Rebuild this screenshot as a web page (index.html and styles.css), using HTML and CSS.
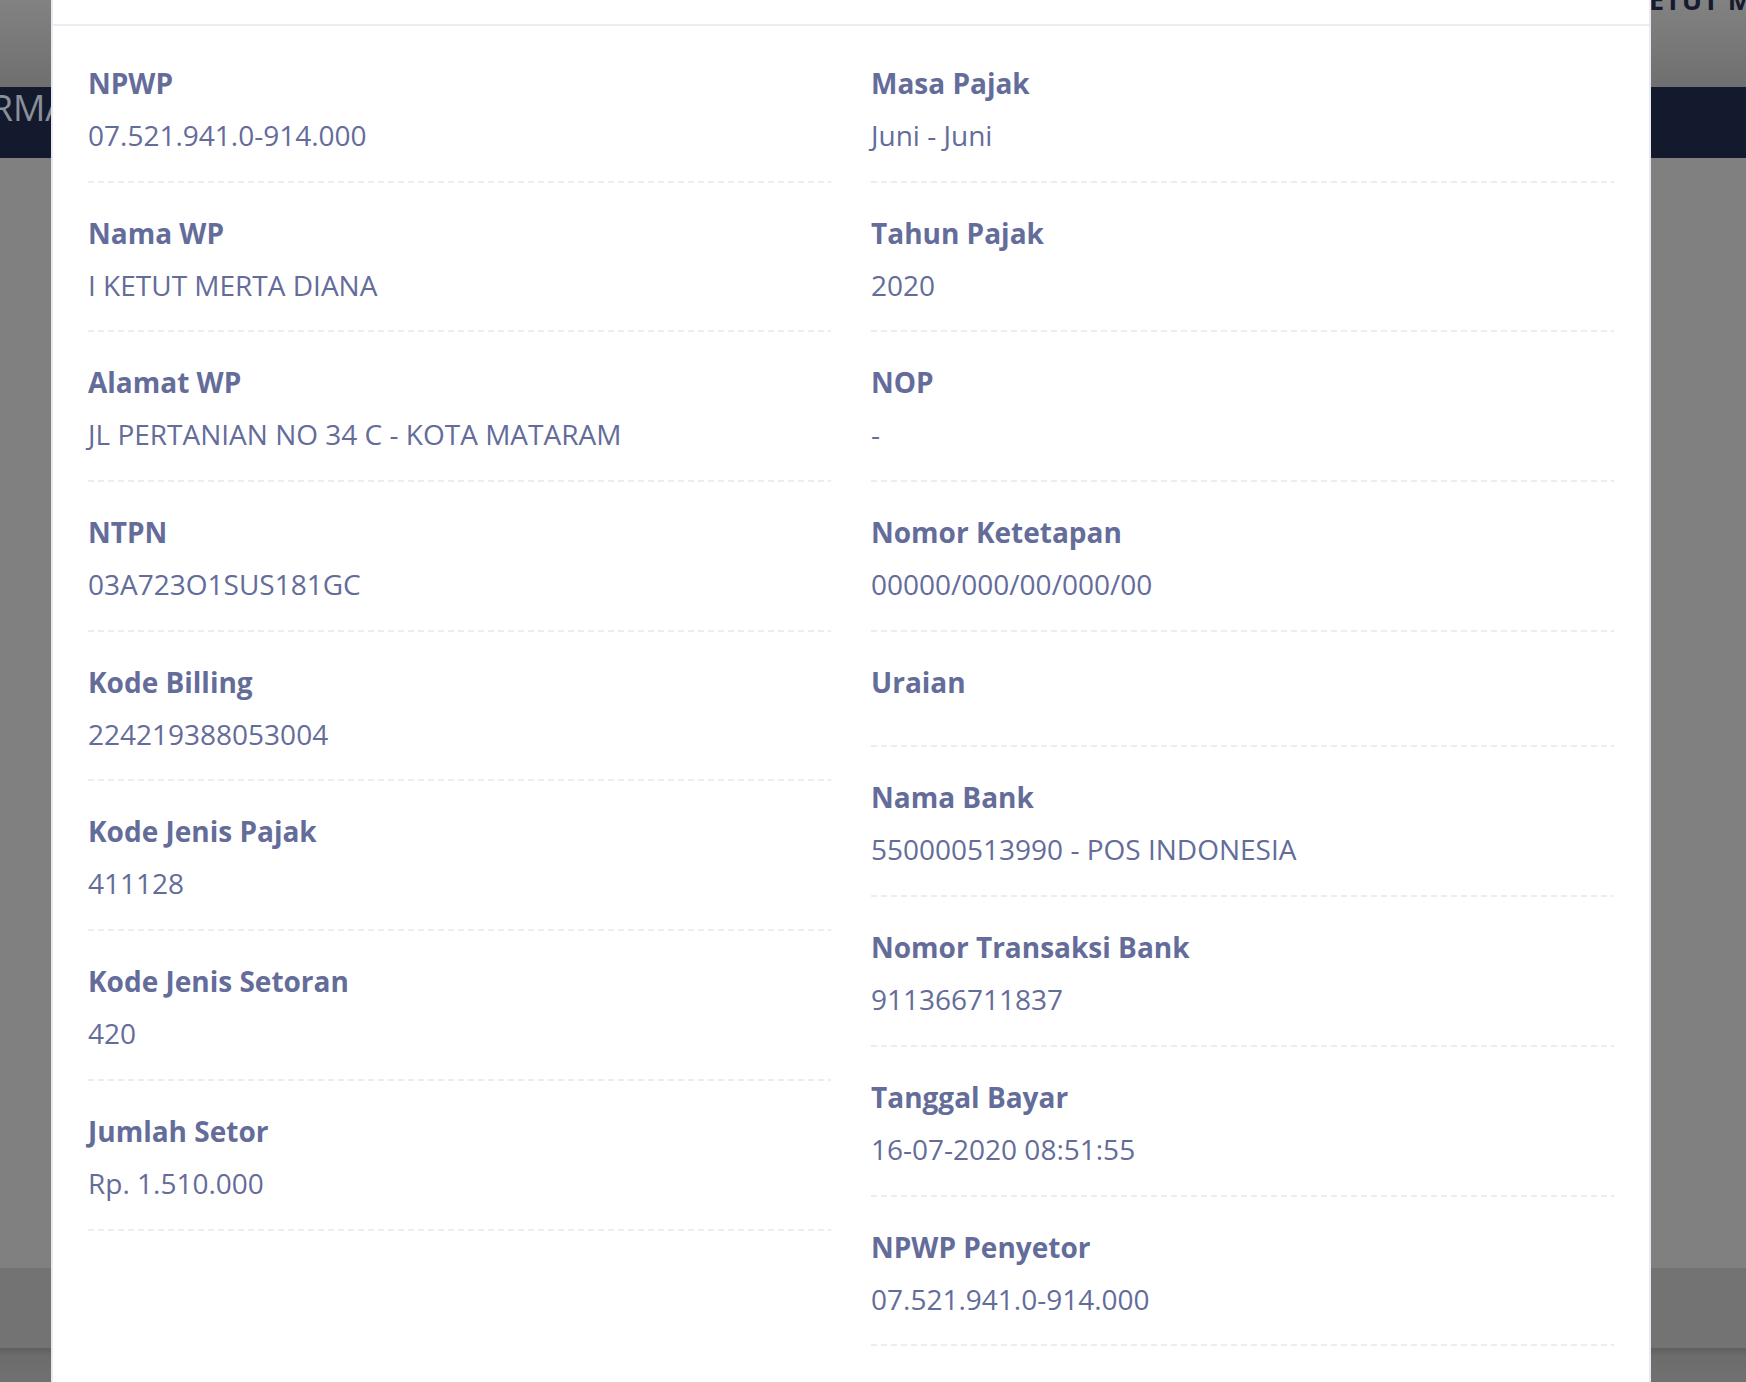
FILE: index.html
```html
<!DOCTYPE html>
<html lang="id">
<head>
<meta charset="utf-8">
<title>Detail Pembayaran</title>
<link rel="stylesheet" href="styles.css">
</head>
<body>
<div class="page">
  <div class="topbar"><span class="user-name">I KETUT MERTA DIANA</span></div>
  <div class="navband"><span class="navband-title">INFORMASI</span></div>
  <div class="content-area"></div>
  <div class="footer-band"></div>
  <div class="footer-bottom"></div>
</div>

<div class="modal">
  <div class="modal-header"></div>
  <div class="modal-body">
    <div class="col">
      <div class="item"><div class="label">NPWP</div><div class="value">07.521.941.0-914.000</div></div>
      <div class="item"><div class="label">Nama WP</div><div class="value">I KETUT MERTA DIANA</div></div>
      <div class="item"><div class="label">Alamat WP</div><div class="value">JL PERTANIAN NO 34 C - KOTA MATARAM</div></div>
      <div class="item"><div class="label">NTPN</div><div class="value">03A723O1SUS181GC</div></div>
      <div class="item"><div class="label">Kode Billing</div><div class="value">224219388053004</div></div>
      <div class="item"><div class="label">Kode Jenis Pajak</div><div class="value">411128</div></div>
      <div class="item"><div class="label">Kode Jenis Setoran</div><div class="value">420</div></div>
      <div class="item"><div class="label">Jumlah Setor</div><div class="value">Rp. 1.510.000</div></div>
    </div>
    <div class="col">
      <div class="item"><div class="label">Masa Pajak</div><div class="value">Juni - Juni</div></div>
      <div class="item"><div class="label">Tahun Pajak</div><div class="value">2020</div></div>
      <div class="item"><div class="label">NOP</div><div class="value">-</div></div>
      <div class="item"><div class="label">Nomor Ketetapan</div><div class="value">00000/000/00/000/00</div></div>
      <div class="item"><div class="label">Uraian</div><div class="value"></div></div>
      <div class="item"><div class="label">Nama Bank</div><div class="value">550000513990 - POS INDONESIA</div></div>
      <div class="item"><div class="label">Nomor Transaksi Bank</div><div class="value">911366711837</div></div>
      <div class="item"><div class="label">Tanggal Bayar</div><div class="value">16-07-2020 08:51:55</div></div>
      <div class="item"><div class="label">NPWP Penyetor</div><div class="value">07.521.941.0-914.000</div></div>
    </div>
  </div>
</div>
</body>
</html>
```

FILE: styles.css
```css
html, body {
  margin: 0;
  padding: 0;
  height: 100%;
  overflow: hidden;
  background: #808080;
  font-family: "Open Sans", "DejaVu Sans", sans-serif;
}

.page {
  display: flex;
  flex-direction: column;
  height: 1382px;
}

.topbar {
  height: 87px;
  background: linear-gradient(#828282, #6f6f6f);
  position: relative;
  overflow: hidden;
}

.user-name {
  position: absolute;
  left: 1612px;
  top: -14px;
  font-size: 27px;
  line-height: 27px;
  font-weight: 700;
  letter-spacing: 1px;
  color: #151a2f;
  white-space: nowrap;
}

.navband {
  height: 71px;
  background: #141a2e;
  display: flex;
  align-items: flex-start;
  overflow: hidden;
}

.navband-title {
  margin-left: -93px;
  margin-top: 3px;
  font-size: 36px;
  line-height: 36px;
  color: #8b8f99;
  white-space: nowrap;
  font-weight: 400;
}

.content-area {
  height: 1110px;
  background: #808080;
}

.footer-band {
  height: 80px;
  background: #737373;
}

.footer-bottom {
  flex: 1;
  background: linear-gradient(#5f5f5f, #6c6c6c 8px, #717171);
}

.modal {
  position: absolute;
  left: 51px;
  top: 0;
  width: 1596px;
  height: 1382px;
  background: #ffffff;
  border-left: 2px solid #e9eaf1;
  border-right: 2px solid #e9eaf1;
}

.modal-header {
  height: 24px;
  border-bottom: 2px solid #ebedf2;
}

.modal-body {
  display: grid;
  grid-template-columns: 1fr 1fr;
  column-gap: 40px;
  padding: 7px 35px 0 35px;
  align-items: start;
}

.item {
  padding: 33px 0 30.7px 0;
  background-image: repeating-linear-gradient(to right, #ebedf2 0 6px, transparent 6px 10px);
  background-size: 100% 2px;
  background-position: left bottom;
  background-repeat: no-repeat;
}

.label {
  font-size: 28px;
  line-height: 34px;
  font-weight: 700;
  color: #646c9a;
  margin-bottom: 18px;
}

.value {
  font-size: 28px;
  line-height: 34px;
  font-weight: 400;
  color: #646c9a;
}
```
